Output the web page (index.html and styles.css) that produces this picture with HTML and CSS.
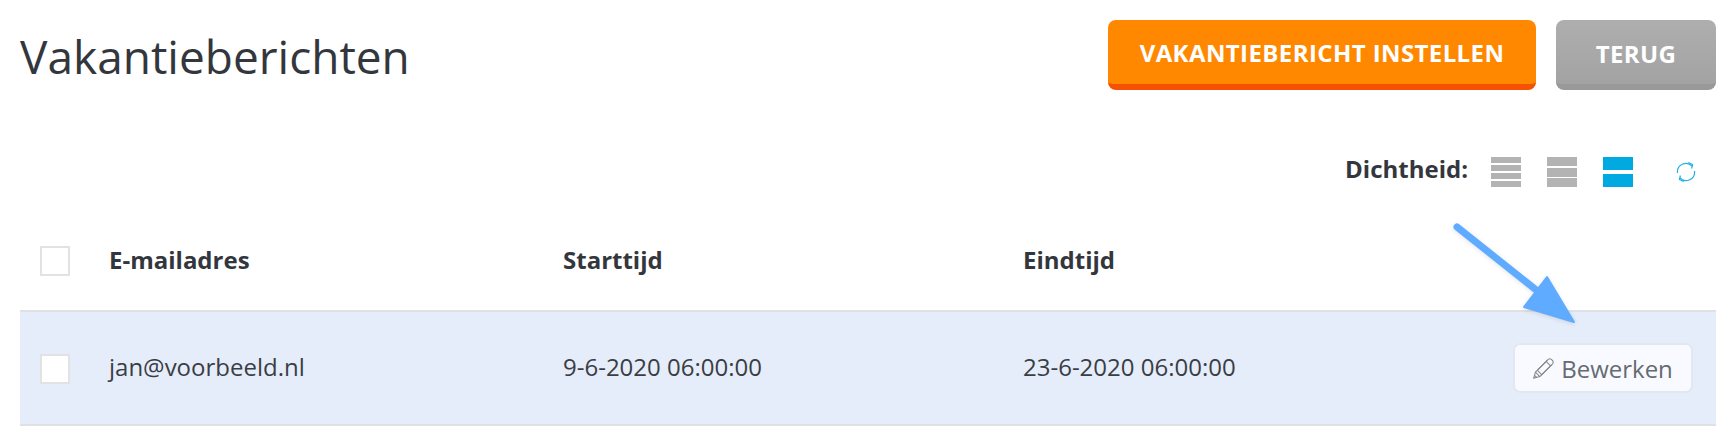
FILE: index.html
```html
<!DOCTYPE html>
<html lang="nl">
<head>
<meta charset="utf-8">
<title>Vakantieberichten</title>
<link rel="stylesheet" href="styles.css">
</head>
<body>
<main class="page">
  <header class="top">
    <h1 class="title">Vakantieberichten</h1>
    <div class="actions">
      <a class="btn btn-orange">VAKANTIEBERICHT INSTELLEN</a>
      <a class="btn btn-grey">TERUG</a>
    </div>
  </header>
  <div class="toolbar">
    <span class="density-label">Dichtheid:</span>
    <div class="density density-4"><i></i><i></i><i></i><i></i></div>
    <div class="density density-3"><i></i><i></i><i></i></div>
    <div class="density density-2 active"><i></i><i></i></div>
    <svg class="refresh" viewBox="0 0 20 20" fill="none" stroke="#1fb0e4" stroke-width="1.2">
      <path d="M1.500 11A8.500 8.500 0 0 1 16 4"/>
      <path d="M18.500 9A8.500 8.500 0 0 1 4 16"/>
      <path d="M12.300 .5 16.600 2.500 15.600 6.500M7.700 19.500 3.400 17.500 4.400 13.500"/>
    </svg>
  </div>
  <div class="row row-head">
    <div class="cell-check"><span class="check"></span></div>
    <div class="cell-text">E-mailadres</div>
    <div class="cell-text">Starttijd</div>
    <div class="cell-text">Eindtijd</div>
    <div></div>
  </div>
  <div class="row row-body">
    <div class="cell-check"><span class="check check-body"></span></div>
    <div class="cell-text">jan@voorbeeld.nl</div>
    <div class="cell-text">9-6-2020 06:00:00</div>
    <div class="cell-text">23-6-2020 06:00:00</div>
    <div class="cell-action">
      <a class="edit">
        <svg class="pencil" viewBox="0 0 20 20" fill="none" stroke="#83878d" stroke-width="1" stroke-linejoin="round">
          <path d="M.6 19.400 2.300 13.500 14.500 1.300Q16 .3 17.500 1.300L18.700 2.500Q19.700 4 18.700 5.500L6.500 17.700Z"/>
          <path d="M2.300 13.500 6.500 17.700M4.200 11.800 8.200 15.800M12.500 3.300 16.700 7.500M4.600 11.200 13.500 2.300M7.700 16.500 17.700 6.500M1.500 16.500 3.500 18.500"/>
        </svg>
        <span>Bewerken</span>
      </a>
    </div>
  </div>
  <svg class="arrow" viewBox="0 0 140 110">
    <g fill="#5fabff" stroke="#5fabff" stroke-linejoin="round" stroke-linecap="round">
      <path d="M5 5 83 67" stroke-width="7" fill="none"/>
      <path d="M95 55 122 100 72 85Z" stroke-width="2"/>
    </g>
  </svg>
</main>
</body>
</html>
```

FILE: styles.css
```css
* { box-sizing: border-box; }
html, body { margin: 0; padding: 0; background: #fff; }
body { font-family: "Open Sans", sans-serif; color: #33373d; }
.page { position: relative; padding: 20px 20px 0; width: 1736px; height: 446px; overflow: hidden; }
.top { display: flex; justify-content: space-between; align-items: flex-start; height: 70px; }
.title { margin: 0; font-size: 46px; line-height: 64px; font-weight: 400; color: #33373d; padding-top: 4px; }
.actions { display: flex; gap: 20px; }
.btn { display: flex; align-items: center; justify-content: center; height: 70px; border-radius: 8px; color: #fff; font-size: 24px; font-weight: 700; letter-spacing: .4px; }
.btn-orange { width: 428px; background: #ff8800; border-bottom: 6px solid #f55100; }
.btn-grey { width: 160px; padding-top: 3px; background: linear-gradient(#aeaeae, #a3a3a3); border-bottom: 6px solid #999; }
.toolbar { display: flex; align-items: center; height: 30px; margin-top: 67px; }
.density-label { margin-left: auto; font-size: 24px; font-weight: 700; margin-right: 23px; line-height: 30px; position: relative; top: -3px; }
.density { display: flex; flex-direction: column; justify-content: space-between; width: 30px; height: 30px; margin-right: 26px; }
.density i { display: block; background: #b3b3b3; }
.density-4 i { height: 6px; }
.density-3 i { height: 9px; }
.density-2 i { height: 13px; }
.density.active i { background: #00a9e0; }
.density-2 { margin-right: 43px; }
.refresh { width: 20px; height: 20px; margin-right: 20px; }
.row { display: grid; grid-template-columns: 89px 454px 460px 1fr 231px; align-items: center; font-size: 24px; }
.row-head { height: 100px; margin-top: 25px; font-weight: 700; border-bottom: 2px solid #dfe1e6; }
.row-body { height: 114px; background: #e6edfa; border-bottom: 2px solid #dfe1e6; font-weight: 400; color: #3a3e44; }
.cell-text { padding-bottom: 4px; }
.row-body .cell-text { padding-bottom: 3px; }
.cell-check { padding-left: 20px; display: flex; }
.check { display: block; width: 30px; height: 30px; background: #fff; border: 2px solid #e2e2e2; }
.check-body { margin-top: 2px; }
.cell-action { display: flex; justify-content: flex-end; padding-right: 23px; }
.edit { display: flex; align-items: center; justify-content: center; gap: 7px; width: 180px; height: 50px; background: #f8faff; border: 2px solid #e4e7ee; border-radius: 7px; color: #666b72; font-size: 24px; }
.pencil { width: 21px; height: 21px; }
.arrow { position: absolute; left: 1452px; top: 222px; width: 140px; height: 110px; filter: drop-shadow(0 1px 2px rgba(0, 0, 0, .12)); }
```
